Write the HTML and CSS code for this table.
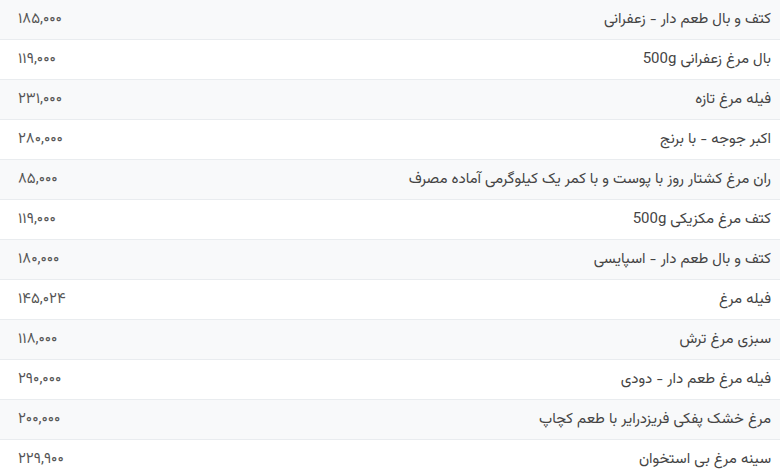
FILE: index.html
```html
<!DOCTYPE html>
<html lang="fa" dir="rtl">
<head>
<meta charset="utf-8">
<link rel="stylesheet" href="styles.css">
</head>
<body>
<div class="list">
  <div class="row"><span class="name">کتف و بال طعم دار - زعفرانی</span><span class="price">۱۸۵,۰۰۰</span></div>
  <div class="row"><span class="name">بال مرغ زعفرانی 500g</span><span class="price">۱۱۹,۰۰۰</span></div>
  <div class="row"><span class="name">فیله مرغ تازه</span><span class="price">۲۳۱,۰۰۰</span></div>
  <div class="row"><span class="name">اکبر جوجه - با برنج</span><span class="price">۲۸۰,۰۰۰</span></div>
  <div class="row"><span class="name">ران مرغ کشتار روز با پوست و با کمر یک کیلوگرمی آماده مصرف</span><span class="price">۸۵,۰۰۰</span></div>
  <div class="row"><span class="name">کتف مرغ مکزیکی 500g</span><span class="price">۱۱۹,۰۰۰</span></div>
  <div class="row"><span class="name">کتف و بال طعم دار - اسپایسی</span><span class="price">۱۸۰,۰۰۰</span></div>
  <div class="row"><span class="name">فیله مرغ</span><span class="price">۱۴۵,۰۲۴</span></div>
  <div class="row"><span class="name">سبزی مرغ ترش</span><span class="price">۱۱۸,۰۰۰</span></div>
  <div class="row"><span class="name">فیله مرغ طعم دار - دودی</span><span class="price">۲۹۰,۰۰۰</span></div>
  <div class="row"><span class="name">مرغ خشک پفکی فریزدرایر با طعم کچاپ</span><span class="price">۲۰۰,۰۰۰</span></div>
  <div class="row"><span class="name">سینه مرغ بی استخوان</span><span class="price">۲۲۹,۹۰۰</span></div>
</div>
</body>
</html>
```
FILE: styles.css
```css
html, body {
  margin: 0;
  padding: 0;
  background: #fff;
}
body {
  font-family: "Vazirmatn", "Noto Sans Arabic", "Noto Sans Arabic UI", "DejaVu Sans", sans-serif;
  font-size: 15px;
  color: #444;
  width: 780px;
  height: 470px;
  overflow: hidden;
}
.list {
  display: flex;
  flex-direction: column;
}
.row {
  display: flex;
  justify-content: space-between;
  align-items: center;
  height: 39px;
  border-bottom: 1px solid #e9ecef;
  background: #fff;
}
.row:nth-child(odd) {
  background: #f8f9fa;
}
.name {
  padding-right: 9px;
}
.price {
  direction: ltr;
  padding-left: 18px;
  color: #555;
}
```
